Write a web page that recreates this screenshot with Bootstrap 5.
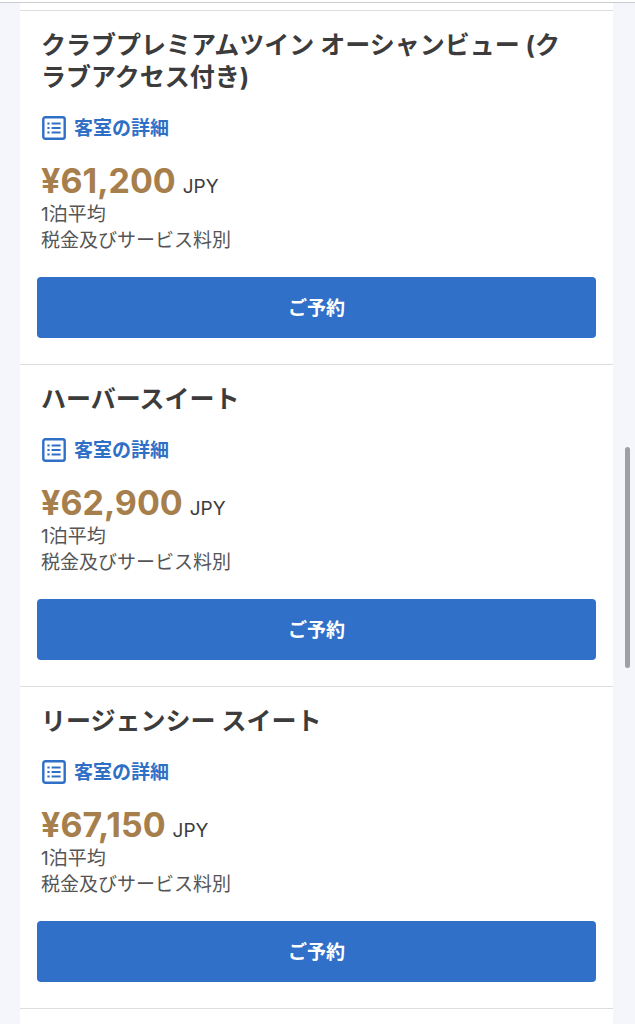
<!DOCTYPE html>
<html lang="ja">
<head>
<meta charset="utf-8">
<meta name="viewport" content="width=device-width, initial-scale=1">
<title>客室一覧</title>
<link href="https://cdn.jsdelivr.net/npm/bootstrap@5.3.0/dist/css/bootstrap.min.css" rel="stylesheet">
<style>
  body { font-family: Inter, "Noto Sans CJK JP", sans-serif; background: #f4f6fb; color: #3c3c3c; height: 100vh; overflow: hidden; }
  .top-edge { height: 3px; background: #fff; border-bottom: 1px solid #cbcccf; }
  .rooms { margin: 0 22px 0 20px; padding-top: 7px; background: #fff; }
  .room { border-top: 1px solid #dedede; padding: 18px 17px 26px; }
  .room-end { border-top: 1px solid #dedede; height: 40px; }
  .room-info { padding: 0 4px; }
  .room-title { font-size: 25px; line-height: 32px; font-weight: 700; margin-bottom: 21px; padding-right: 20px; }
  .room-link { color: #2f70c6; font-size: 19px; line-height: 28px; font-weight: 700; gap: 8px; padding-left: 1px; }
  .room-link span { padding-top: 1px; line-height: 27px; }
  .room-price { margin-top: 19px; height: 41px; line-height: 40px; gap: 7px; }
  .amount { color: #a67f4d; font-size: 34px; font-weight: 700; }
  .currency { font-size: 19px; }
  .note { font-size: 19px; line-height: 26px; color: #555; }
  .btn-book { --bs-btn-bg: #3070c8; --bs-btn-color: #fff; --bs-btn-hover-bg: #285fac; --bs-btn-hover-color: #fff; --bs-btn-border-width: 0; --bs-btn-border-radius: 4px; --bs-btn-font-size: 19px; --bs-btn-font-weight: 700; --bs-btn-line-height: 29px; padding: 17px 12px 15px; margin-top: 23px; }
  .scroll-thumb { right: 5px; top: 43.7%; width: 5px; height: 21.5%; background: #9f9fa4; }
</style>
</head>
<body>
<svg class="d-none" xmlns="http://www.w3.org/2000/svg">
  <symbol id="list-icon" viewBox="0 0 24 24">
    <rect x="1.3" y="1.3" width="21.4" height="21.4" rx="2" fill="none" stroke="currentColor" stroke-width="2.4"/>
    <path d="M9.6 7.4H18.6M9.6 12H18.6M9.6 16.6H18.6" fill="none" stroke="currentColor" stroke-width="2"/>
    <path d="M5.4 7.4H7.6M5.4 12H7.6M5.4 16.6H7.6" fill="none" stroke="currentColor" stroke-width="2"/>
  </symbol>
</svg>
<div class="top-edge"></div>
<main class="rooms">
  <section class="room">
    <div class="room-info">
      <h2 class="room-title">クラブプレミアムツイン オーシャンビュー (クラブアクセス付き)</h2>
      <a href="#" class="room-link d-flex align-items-center text-decoration-none"><svg width="24" height="24" aria-hidden="true"><use href="#list-icon"/></svg><span>客室の詳細</span></a>
      <div class="room-price d-flex align-items-baseline"><span class="amount">¥61,200</span><span class="currency">JPY</span></div>
      <div class="note">1泊平均</div>
      <div class="note">税金及びサービス料別</div>
    </div>
    <button type="button" class="btn btn-book d-block w-100">ご予約</button>
  </section>
  <section class="room">
    <div class="room-info">
      <h2 class="room-title">ハーバースイート</h2>
      <a href="#" class="room-link d-flex align-items-center text-decoration-none"><svg width="24" height="24" aria-hidden="true"><use href="#list-icon"/></svg><span>客室の詳細</span></a>
      <div class="room-price d-flex align-items-baseline"><span class="amount">¥62,900</span><span class="currency">JPY</span></div>
      <div class="note">1泊平均</div>
      <div class="note">税金及びサービス料別</div>
    </div>
    <button type="button" class="btn btn-book d-block w-100">ご予約</button>
  </section>
  <section class="room">
    <div class="room-info">
      <h2 class="room-title">リージェンシー スイート</h2>
      <a href="#" class="room-link d-flex align-items-center text-decoration-none"><svg width="24" height="24" aria-hidden="true"><use href="#list-icon"/></svg><span>客室の詳細</span></a>
      <div class="room-price d-flex align-items-baseline"><span class="amount">¥67,150</span><span class="currency">JPY</span></div>
      <div class="note">1泊平均</div>
      <div class="note">税金及びサービス料別</div>
    </div>
    <button type="button" class="btn btn-book d-block w-100">ご予約</button>
  </section>
  <div class="room-end"></div>
</main>
<div class="scroll-thumb position-fixed rounded-pill"></div>
<script src="https://cdn.jsdelivr.net/npm/bootstrap@5.3.0/dist/js/bootstrap.bundle.min.js"></script>
</body>
</html>
